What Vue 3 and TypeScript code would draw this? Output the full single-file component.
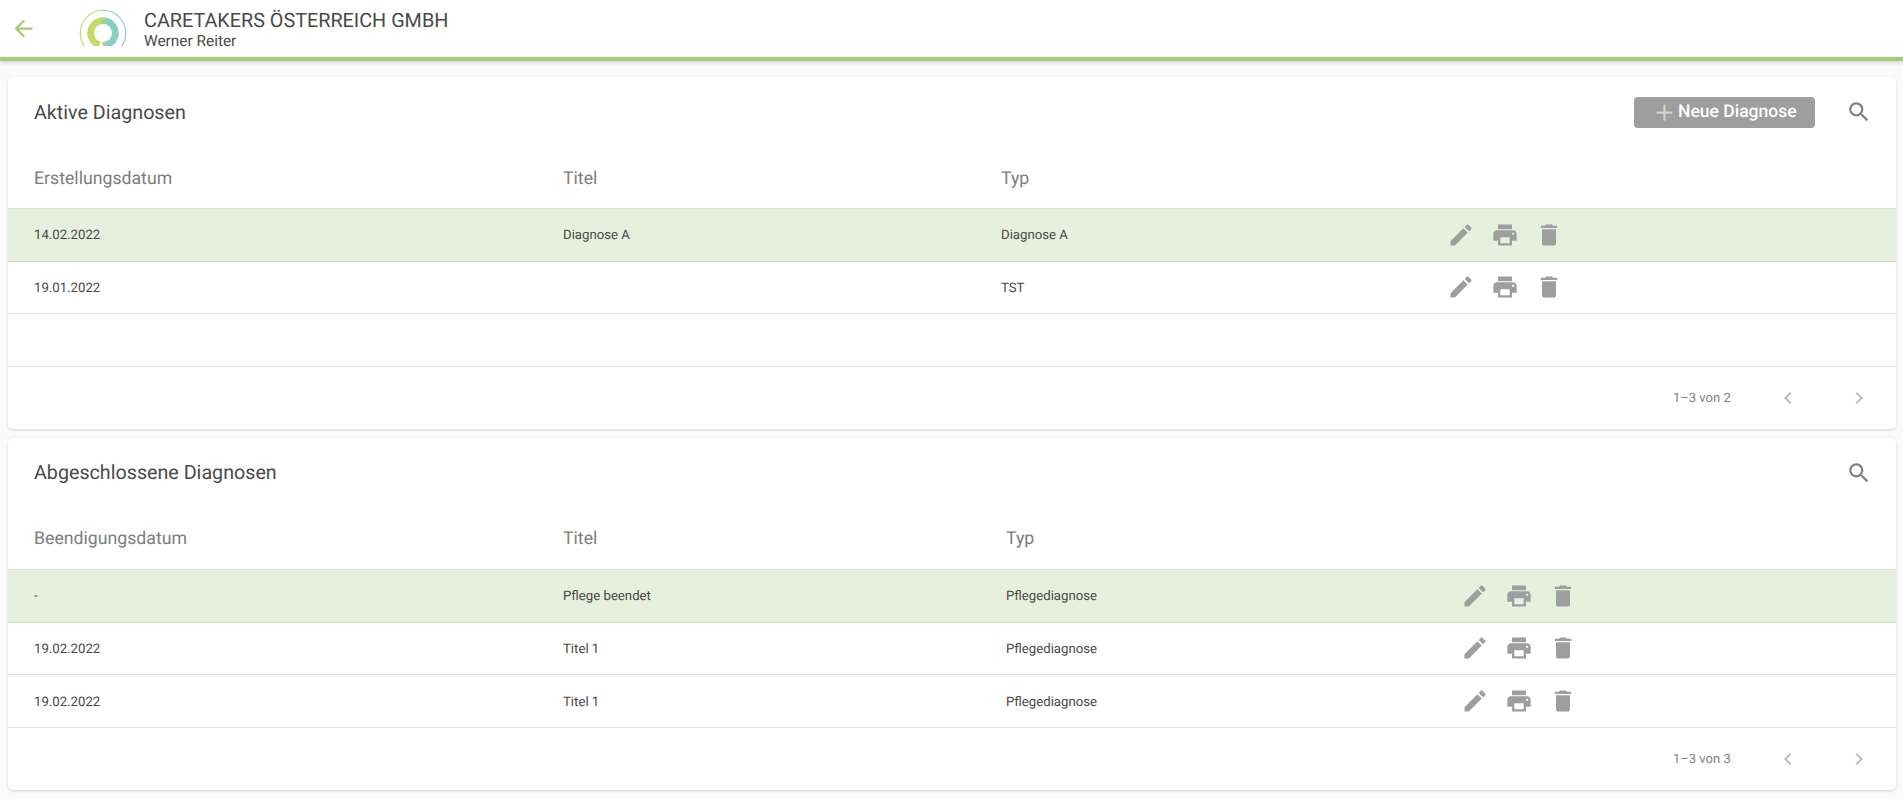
<script setup lang="ts">
interface Row { date: string; title: string; type: string; empty?: boolean }
interface Section {
  title: string; dateLabel: string; variant: string; hasAdd: boolean; range: string; rows: Row[]
}
const sections: Section[] = [
  {
    title: 'Aktive Diagnosen', dateLabel: 'Erstellungsdatum', variant: 'cols-a', hasAdd: true, range: '1–3 von 2',
    rows: [
      { date: '14.02.2022', title: 'Diagnose A', type: 'Diagnose A' },
      { date: '19.01.2022', title: '', type: 'TST' },
      { date: '', title: '', type: '', empty: true },
    ],
  },
  {
    title: 'Abgeschlossene Diagnosen', dateLabel: 'Beendigungsdatum', variant: 'cols-b', hasAdd: false, range: '1–3 von 3',
    rows: [
      { date: '-', title: 'Pflege beendet', type: 'Pflegediagnose' },
      { date: '19.02.2022', title: 'Titel 1', type: 'Pflegediagnose' },
      { date: '19.02.2022', title: 'Titel 1', type: 'Pflegediagnose' },
    ],
  },
]
</script>

<template>
  <div class="page">
    <header class="topbar">
      <svg class="back" viewBox="0 0 24 24"><path d="M20 11H7.83l5.59-5.59L12 4l-8 8 8 8 1.41-1.41L7.83 13H20v-2z" /></svg>
      <svg class="logo" viewBox="0 0 50 38">
        <defs>
          <linearGradient id="lg" gradientUnits="userSpaceOnUse" x1="18" x2="33" y1="0" y2="0">
            <stop offset="0.2" stop-color="#c6d96b" />
            <stop offset="0.8" stop-color="#86d0c0" />
          </linearGradient>
        </defs>
        <circle cx="25" cy="25" r="22.7" fill="none" stroke="url(#lg)" stroke-width="1.1" />
        <path d="M21.6 36.8 A12.3 12.3 0 1 1 28.4 36.8 L28.8 38" fill="none" stroke="url(#lg)" stroke-width="6.8" />
      </svg>
      <div class="brand">
        <div class="company">CARETAKERS ÖSTERREICH GMBH</div>
        <div class="person">Werner Reiter</div>
      </div>
    </header>

    <main class="content">
      <section v-for="s in sections" :key="s.title" class="card">
        <div class="toolbar">
          <h2 class="card-title">{{ s.title }}</h2>
          <button v-if="s.hasAdd" class="add" type="button">
            <svg class="plus" viewBox="0 0 24 24"><path d="M19 13h-6v6h-2v-6H5v-2h6V5h2v6h6v2z" /></svg>
            <span>Neue Diagnose</span>
          </button>
          <svg class="search" viewBox="0 0 24 24"><path d="M15.5 14h-.79l-.28-.27C15.41 12.59 16 11.11 16 9.5 16 5.91 13.09 3 9.5 3S3 5.91 3 9.5 5.91 16 9.5 16c1.61 0 3.09-.59 4.23-1.57l.27.28v.79l5 4.99L20.49 19l-4.99-5zm-6 0C7.01 14 5 11.99 5 9.5S7.01 5 9.5 5 14 7.01 14 9.5 11.99 14 9.5 14z" /></svg>
        </div>

        <div class="row head" :class="s.variant">
          <div class="cell text">{{ s.dateLabel }}</div>
          <div class="cell text">Titel</div>
          <div class="cell text">Typ</div>
          <div class="cell"></div>
        </div>

        <div v-for="(r, i) in s.rows" :key="i" class="row body" :class="[s.variant, { active: i === 0 }]">
          <div class="cell text">{{ r.date }}</div>
          <div class="cell text">{{ r.title }}</div>
          <div class="cell text">{{ r.type }}</div>
          <div v-if="!r.empty" class="cell actions">
            <svg viewBox="0 0 24 24"><path d="M3 17.25V21h3.75L17.81 9.94l-3.75-3.75L3 17.25zM20.71 7.04c.39-.39.39-1.02 0-1.41l-2.34-2.34c-.39-.39-1.02-.39-1.41 0l-1.83 1.83 3.75 3.75 1.83-1.83z" /></svg>
            <svg viewBox="0 0 24 24"><path d="M19 8H5c-1.66 0-3 1.34-3 3v6h4v4h12v-4h4v-6c0-1.66-1.34-3-3-3zm-3 11H8v-5h8v5zm3-7c-.55 0-1-.45-1-1s.45-1 1-1 1 .45 1 1-.45 1-1 1zm-1-9H6v4h12V3z" /></svg>
            <svg viewBox="0 0 24 24"><path d="M6 19c0 1.1.9 2 2 2h8c1.1 0 2-.9 2-2V7H6v12zM19 4h-3.5l-1-1h-5l-1 1H5v2h14V4z" /></svg>
          </div>
        </div>

        <div class="pager">
          <span class="range">{{ s.range }}</span>
          <svg class="chev first" viewBox="0 0 24 24"><path d="M15.41 7.41L14 6l-6 6 6 6 1.41-1.41L10.83 12z" /></svg>
          <svg class="chev" viewBox="0 0 24 24"><path d="M10 6L8.59 7.41 13.17 12l-4.58 4.59L10 18l6-6z" /></svg>
        </div>
      </section>
    </main>
  </div>
</template>

<style>
html, body { margin: 0; background: #fafafa; }
</style>

<style scoped>
.page {
  font-family: Roboto, "Liberation Sans", sans-serif;
  text-rendering: geometricPrecision;
  background: #fafafa;
  height: 799px;
  overflow: hidden;
}
.topbar {
  height: 57px;
  background: #fff;
  border-bottom: 4px solid #a5cc78;
  box-shadow: 0 2px 4px rgba(0, 0, 0, 0.15);
  display: flex;
  align-items: center;
}
.back {
  width: 27px;
  height: 27px;
  fill: #a5cc78;
  margin-left: 9.5px;
  flex: none;
}
.logo {
  width: 50px;
  height: 38px;
  margin-left: 41px;
  margin-bottom: 3px;
  flex: none;
}
.brand {
  margin-left: 16.5px;
  color: #4a4a4a;
  margin-top: 1px;
}
.company { font-size: 19.8px; line-height: 25px; }
.person { font-size: 15.4px; line-height: 17px; }
.content {
  padding: 16px 7px 0 8px;
  display: flex;
  flex-direction: column;
  gap: 9px;
}
.card {
  background: #fff;
  border-radius: 5px;
  box-shadow: 0 1px 3px rgba(0, 0, 0, 0.16);
}
.toolbar {
  height: 70px;
  display: flex;
  align-items: center;
  padding: 0 24px 0 26px;
}
.card-title {
  margin: 0;
  flex: 1;
  font-size: 19.7px;
  font-weight: 400;
  color: #4a4a4a;
}
.add {
  width: 181px;
  height: 31px;
  margin-right: 31px;
  padding: 0 0 0 17px;
  border: 0;
  border-radius: 4px;
  background: #9e9e9e;
  color: #fff;
  font: 500 17.5px Roboto, sans-serif;
  text-rendering: geometricPrecision;
  display: flex;
  align-items: center;
}
.plus {
  width: 27px;
  height: 27px;
  fill: #d0d0d0;
}
.search {
  width: 26px;
  height: 26px;
  fill: #808080;
}
.row { display: grid; }
.cols-a { grid-template-columns: 529px 438px 446px 1fr; }
.cols-b { grid-template-columns: 529px 443px 455px 1fr; }
.cell {
  padding-left: 26px;
  display: flex;
  align-items: center;
}
.text { padding-top: 2px; }
.head {
  height: 61px;
  font-size: 17.7px;
  color: #7d7d7d;
  border-bottom: 1px solid #e0e0e0;
}
.body {
  height: 52.67px;
  box-sizing: border-box;
  font-size: 13.2px;
  color: #484848;
  border-bottom: 1px solid #e0e0e0;
}
.active {
  background: #e7f0dc;
  border-bottom-color: #d8dfcd;
}
.actions { gap: 16px; }
.actions svg {
  width: 28px;
  height: 28px;
  fill: #9e9e9e;
  flex: none;
}
.pager {
  height: 62px;
  display: flex;
  align-items: center;
  padding-left: 1665px;
  font-size: 13px;
  color: #808080;
}
.range { width: 70px; padding-top: 2px; }
.chev {
  width: 24px;
  height: 24px;
  fill: #bdbdbd;
  margin-left: 47px;
}
.chev.first { margin-left: 33px; }
</style>
